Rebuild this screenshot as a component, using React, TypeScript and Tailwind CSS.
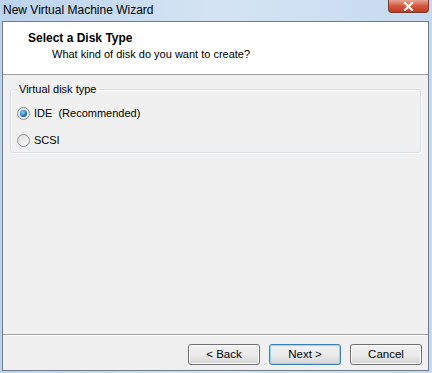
import React from "react";

function Radio({ checked }: { checked?: boolean }) {
  return (
    <span className="w-[13px] h-[13px] rounded-full border border-[#8f8f8f] bg-gradient-to-br from-[#dcdcdc] to-[#fbfbfb] flex items-center justify-center shrink-0">
      {checked && (
        <span className="w-[7px] h-[7px] rounded-full bg-[radial-gradient(circle_at_40%_35%,#8fd0ff,#1c6fb8_60%,#0b3e73)]" />
      )}
    </span>
  );
}

function Btn({ label, focus }: { label: string; focus?: boolean }) {
  return (
    <div
      className={
        "w-[72px] h-[21px] rounded-[3px] border flex items-center justify-center text-[11.5px] text-black bg-gradient-to-b from-[#f2f2f2] via-[#ebebeb] to-[#d5d5d5] " +
        (focus ? "border-[#3c7fb1] shadow-[inset_0_0_0_1px_#9ad4f7]" : "border-[#707070] shadow-[inset_0_0_0_1px_#fcfcfc]")
      }
    >
      {label}
    </div>
  );
}

export default function App() {
  return (
    <div className="w-[432px] h-[373px] overflow-hidden bg-gradient-to-r from-[#bcd3ec] via-[#d4e4f4] to-[#c6daee] flex flex-col font-['Liberation_Sans',Arial,sans-serif]">
      {/* title bar */}
      <div className="h-[21px] relative shrink-0">
        <span className="absolute left-[3px] top-[3px] text-[12px] leading-[14px] text-black">
          New Virtual Machine Wizard
        </span>
        <div className="absolute left-[388px] top-0 w-[41px] h-[13px] rounded-b-[4px] border border-t-0 border-[#7a3a32] bg-gradient-to-b from-[#e8a493] via-[#d2583f] to-[#c23a1f] flex items-center justify-center">
          <svg width="11" height="9" viewBox="0 0 11 9">
            <path d="M2 1 L9 8 M9 1 L2 8" stroke="#ffffff" strokeWidth="2.2" strokeLinecap="square" />
          </svg>
        </div>
      </div>

      {/* client */}
      <div className="ml-[2px] w-[427px] h-[350px] border border-[#6f7b8b] bg-[#f0f0f0] flex flex-col">
        <div className="h-[53px] bg-white border-b border-[#a0a0a0] pl-[25px] pt-[9px] shrink-0">
          <div className="text-[12px] font-bold leading-[15px] text-black">Select a Disk Type</div>
          <div className="text-[11px] leading-[15px] text-black pl-[24px] pt-[1px]">
            What kind of disk do you want to create?
          </div>
        </div>

        <div className="px-[7px] pt-[14px]">
          <div className="relative border border-[#d5dfe5] rounded-[3px] h-[64px] pt-[16px] pl-[6px] flex flex-col gap-[13px] shadow-[inset_1px_1px_0_#ffffff,1px_1px_0_#ffffff]">
            <span className="absolute left-[6px] -top-[8px] px-[2px] bg-[#f0f0f0] text-[11px] leading-[14px] text-black">
              Virtual disk type
            </span>
            <label className="flex items-center gap-[4px] text-[11px] leading-[14px] text-black">
              <Radio checked />
              <span>IDE&nbsp;&nbsp;(Recommended)</span>
            </label>
            <label className="flex items-center gap-[4px] text-[11px] leading-[14px] text-black">
              <Radio />
              <span>SCSI</span>
            </label>
          </div>
        </div>

        <div className="mt-auto border-t border-[#a0a0a0] h-[36px] flex items-start justify-end gap-[9px] pt-[9px] pr-[6px] shadow-[inset_0_1px_0_#ffffff]">
          <Btn label="< Back" />
          <Btn label="Next >" focus />
          <Btn label="Cancel" />
        </div>
      </div>
    </div>
  );
}
